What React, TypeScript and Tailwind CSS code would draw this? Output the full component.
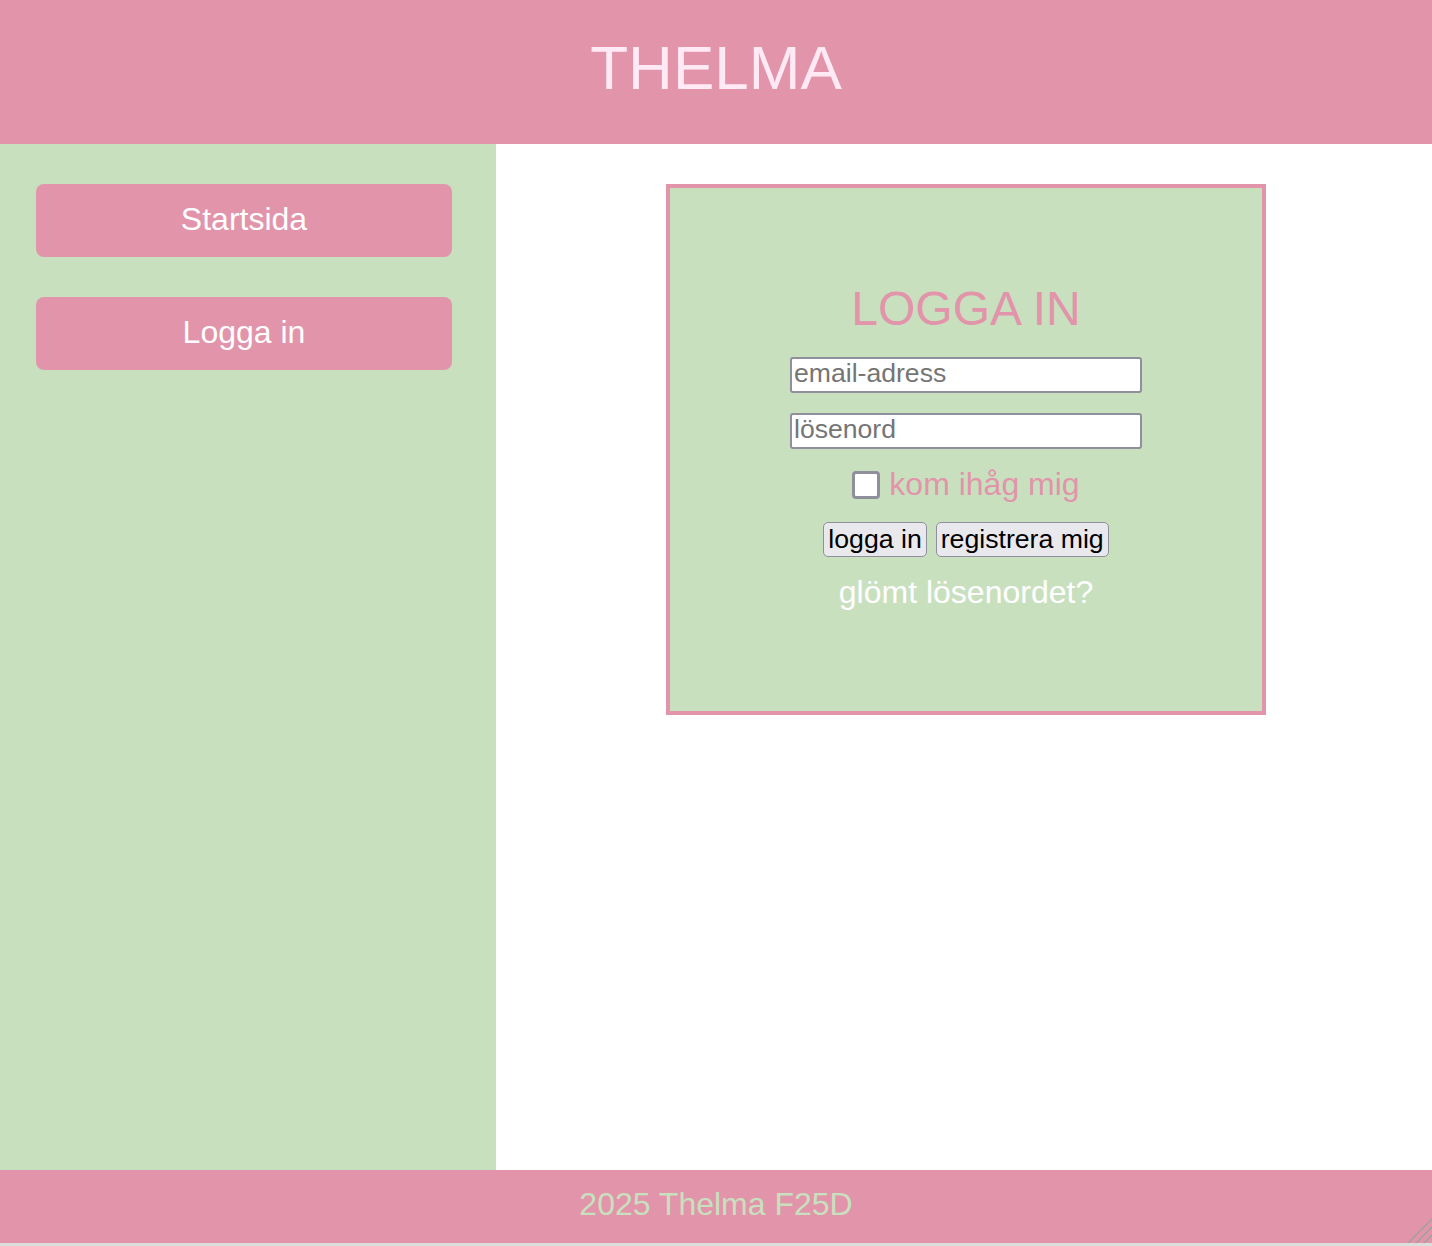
import React from "react";

export default function App() {
  const font = { fontFamily: '"Liberation Sans", Arial, Helvetica, sans-serif' };
  return (
    <div style={font} className="w-[1432px] h-[1246px] flex flex-col bg-white relative overflow-hidden">
      <header className="h-[144px] shrink-0 bg-[#e194aa] pt-[32px] text-center">
        <h1 className="text-[62px] leading-[72px] text-[#ffe9f5] font-normal">THELMA</h1>
      </header>
      <div className="flex flex-1">
        <nav className="w-[496px] bg-[#c9e0bf] pt-[40px] pl-[36px] pr-[44px] flex flex-col gap-[40px]">
          <a className="h-[73px] rounded-[8px] bg-[#e194aa] text-white text-[32px] leading-[37px] flex justify-center pt-[17px]">Startsida</a>
          <a className="h-[73px] rounded-[8px] bg-[#e194aa] text-white text-[32px] leading-[37px] flex justify-center pt-[17px]">Logga in</a>
        </nav>
        <main className="flex-1 flex justify-center pl-[4px] pt-[40px]">
          <div className="w-[600px] h-[531px] border-4 border-[#e194aa] bg-[#c9e0bf] flex flex-col items-center pt-[93px]">
            <h2 className="text-[48px] leading-[55px] text-[#e194aa] font-normal">LOGGA IN</h2>
            <input
              placeholder="email-adress"
              className="mt-[21px] w-[352px] h-[36px] bg-white border-2 border-[#8f8f9d] rounded-[3px] px-[2px] pb-[4px] text-[26.6px] leading-[28px] placeholder:text-[#757575] outline-none"
              style={font}
            />
            <input
              placeholder="lösenord"
              type="text"
              className="mt-[20px] w-[352px] h-[36px] bg-white border-2 border-[#8f8f9d] rounded-[3px] px-[2px] pb-[4px] text-[26.6px] leading-[28px] placeholder:text-[#757575] outline-none"
              style={font}
            />
            <label className="mt-[17px] h-[37px] flex items-center gap-[9px]">
              <span className="w-[28px] h-[28px] bg-white border-[3px] border-[#8f8f9d] rounded-[4px]" />
              <span className="text-[32px] leading-[37px] text-[#e194aa]">kom ihåg mig</span>
            </label>
            <div className="mt-[19px] flex gap-[9px]">
              <button className="h-[35px] px-[4px] bg-[#e9e9ed] border border-[#8f8f9d] rounded-[5px] text-[26.67px] leading-[31px] text-black" style={font}>logga in</button>
              <button className="h-[35px] px-[4px] bg-[#e9e9ed] border border-[#8f8f9d] rounded-[5px] text-[26.67px] leading-[31px] text-black" style={font}>registrera mig</button>
            </div>
            <a className="mt-[17px] text-[32px] leading-[37px] text-white">glömt lösenordet?</a>
          </div>
        </main>
      </div>
      <footer className="h-[73px] shrink-0 bg-[#e194aa] pt-[16px] text-center relative">
        <p className="text-[32px] leading-[37px] text-[#c9e0bf]">2025 Thelma F25D</p>
        <svg className="absolute right-0 bottom-0" width="26" height="26" viewBox="0 0 26 26">
          <line x1="26" y1="2" x2="2" y2="26" stroke="#a0a0a0" strokeWidth="1.5" />
          <line x1="26" y1="10" x2="10" y2="26" stroke="#a0a0a0" strokeWidth="1.5" />
          <line x1="26" y1="18" x2="18" y2="26" stroke="#a0a0a0" strokeWidth="1.5" />
        </svg>
      </footer>
      <div className="h-[3px] shrink-0 bg-[#dedede]" />
    </div>
  );
}
